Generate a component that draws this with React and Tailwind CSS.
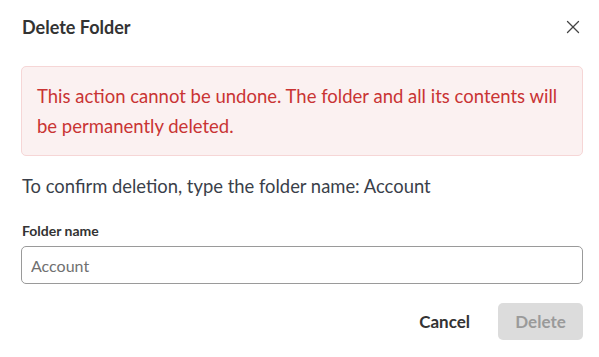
import React from 'react';
import { X } from 'lucide-react';

export default function App() {
  return (
    <div className="w-[599px] h-[357px] bg-white pl-[21px] pr-[16px] font-[Lato,'Noto_Sans',sans-serif]">
      <div className="flex items-center justify-between h-[54px]">
        <h2 className="text-[18px] font-bold text-[#333333] pl-[1px]">Delete Folder</h2>
        <button className="text-[#444] mr-[-1px]">
          <X size={22} strokeWidth={1.4} />
        </button>
      </div>

      <div className="mt-[12px] rounded-[5px] border border-[#f6d6d6] bg-[#fbf1f1] px-[15px] py-[14px] text-[18.5px] leading-[30px] text-[#c93434]">
        This action cannot be undone. The folder and all its contents will be permanently deleted.
      </div>

      <p className="mt-[17px] text-[18.4px] leading-[26px] text-[#3a3f4a] pl-[1px]">
        To confirm deletion, type the folder name: Account
      </p>

      <label className="block mt-[23px] text-[14px] font-bold text-[#333] pl-[1px] leading-[18px]">
        Folder name
      </label>
      <input
        readOnly
        placeholder="Account"
        className="mt-[6px] w-full h-[38px] rounded-[5px] border border-[#9a9a9a] px-[9px] text-[16px] text-[#666] placeholder:text-[#707070] outline-none"
      />

      <div className="flex justify-end items-center gap-[28px] mt-[19px]">
        <button className="text-[17px] font-bold text-[#333]">Cancel</button>
        <button className="h-[37px] w-[85px] rounded-[5px] bg-[#dcdcdc] text-[17px] font-bold text-[#9a9a9a]">
          Delete
        </button>
      </div>
    </div>
  );
}
